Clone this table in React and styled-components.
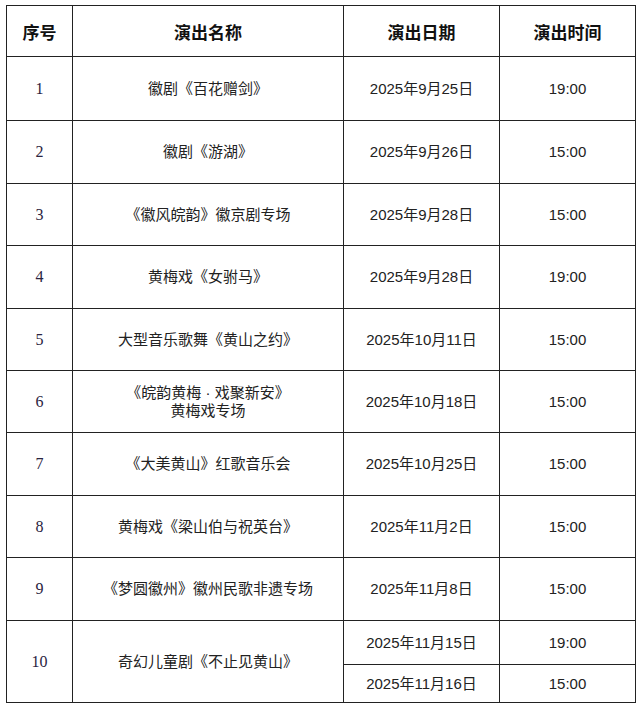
import React from 'react';
import styled, { createGlobalStyle } from 'styled-components';

const GlobalStyle = createGlobalStyle`
  html, body {
    margin: 0;
    padding: 0;
    background: #ffffff;
  }
`;

const Page = styled.div`
  padding: 5px 0 0 6px;
  width: 640px;
  height: 711px;
  box-sizing: border-box;
  background: #ffffff;
`;

const Table = styled.table`
  border-collapse: collapse;
  table-layout: fixed;
  width: 629px;
  border: 1.5px solid #222;
  font-family: "Liberation Sans", "Noto Sans CJK SC", sans-serif;
  color: #1a1a1a;
`;

const HeadCell = styled.th`
  height: 50px;
  padding: 0;
  border: 1px solid #222;
  font-size: 17px;
  font-weight: bold;
  text-align: center;
  vertical-align: middle;
  font-family: "Noto Sans CJK SC", sans-serif;
  color: #111;
`;

const Cell = styled.td`
  height: ${p => (p.$h ? p.$h : 61)}px;
  padding: 0;
  border: 1px solid #222;
  font-size: 15px;
  line-height: 18px;
  text-align: center;
  vertical-align: middle;
  color: #222;
`;

const NumCell = styled(Cell)`
  font-family: "Liberation Serif", serif;
  font-size: 16px;
  color: #2a2340;
`;

const shows = [
  { n: '1', name: '徽剧《百花赠剑》', date: '2025年9月25日', time: '19:00' },
  { n: '2', name: '徽剧《游湖》', date: '2025年9月26日', time: '15:00' },
  { n: '3', name: '《徽风皖韵》徽京剧专场', date: '2025年9月28日', time: '15:00' },
  { n: '4', name: '黄梅戏《女驸马》', date: '2025年9月28日', time: '19:00' },
  { n: '5', name: '大型音乐歌舞《黄山之约》', date: '2025年10月11日', time: '15:00' },
  { n: '6', name: ['《皖韵黄梅 · 戏聚新安》', '黄梅戏专场'], date: '2025年10月18日', time: '15:00' },
  { n: '7', name: '《大美黄山》红歌音乐会', date: '2025年10月25日', time: '15:00' },
  { n: '8', name: '黄梅戏《梁山伯与祝英台》', date: '2025年11月2日', time: '15:00' },
  { n: '9', name: '《梦圆徽州》徽州民歌非遗专场', date: '2025年11月8日', time: '15:00' },
];

const heights = [63, 62, 61, 62, 61, 61, 62, 61, 62];

export default function App() {
  return (
    <Page>
      <GlobalStyle />
      <Table>
        <colgroup>
          <col style={{ width: 66 }} />
          <col style={{ width: 271 }} />
          <col style={{ width: 156 }} />
          <col style={{ width: 136 }} />
        </colgroup>
        <thead>
          <tr>
            <HeadCell>序号</HeadCell>
            <HeadCell>演出名称</HeadCell>
            <HeadCell>演出日期</HeadCell>
            <HeadCell>演出时间</HeadCell>
          </tr>
        </thead>
        <tbody>
          {shows.map((s, i) => (
            <tr key={s.n}>
              <NumCell $h={heights[i]}>{s.n}</NumCell>
              <Cell $h={heights[i]}>
                {Array.isArray(s.name)
                  ? s.name.map((l, j) => <div key={j}>{l}</div>)
                  : s.name}
              </Cell>
              <Cell $h={heights[i]}>{s.date}</Cell>
              <Cell $h={heights[i]}>{s.time}</Cell>
            </tr>
          ))}
          <tr>
            <NumCell rowSpan={2} $h={43}>10</NumCell>
            <Cell rowSpan={2} $h={43}>奇幻儿童剧《不止见黄山》</Cell>
            <Cell $h={43}>2025年11月15日</Cell>
            <Cell $h={43}>19:00</Cell>
          </tr>
          <tr>
            <Cell $h={37}>2025年11月16日</Cell>
            <Cell $h={37}>15:00</Cell>
          </tr>
        </tbody>
      </Table>
    </Page>
  );
}
